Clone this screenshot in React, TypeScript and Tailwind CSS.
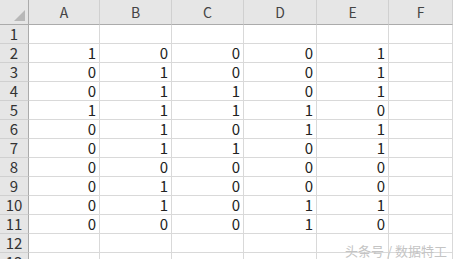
const cols = ["A", "B", "C", "D", "E", "F"];

const data: (number[] | null)[] = [
  null,
  [1, 0, 0, 0, 1],
  [0, 1, 0, 0, 1],
  [0, 1, 1, 0, 1],
  [1, 1, 1, 1, 0],
  [0, 1, 0, 1, 1],
  [0, 1, 1, 0, 1],
  [0, 0, 0, 0, 0],
  [0, 1, 0, 0, 0],
  [0, 1, 0, 1, 1],
  [0, 0, 0, 1, 0],
  null,
  null,
];

export default function App() {
  return (
    <div
      className="relative h-[259px] w-[453px] overflow-hidden bg-white"
      style={{ fontFamily: '"Noto Sans CJK SC", "Noto Sans", sans-serif' }}
    >
      <div className="grid grid-cols-[29px_71px_72px_72px_73px_72px_1fr]">
        {/* corner */}
        <div className="relative h-[25px] border-b border-r border-[#ababab] bg-[#e6e6e6]">
          <div className="absolute bottom-[3px] right-[3px] h-0 w-0 border-b-[11px] border-l-[11px] border-b-[#b8b8b8] border-l-transparent" />
        </div>
        {cols.map((c) => (
          <div
            key={c}
            className="flex h-[25px] items-center justify-center border-b border-r border-b-[#ababab] border-r-[#d0d0d0] bg-[#e6e6e6] text-[14px] text-[#444]"
          >
            {c}
          </div>
        ))}
        {data.map((row, r) => (
          <Row key={r} n={r + 1} values={row} />
        ))}
      </div>
      <div className="absolute right-[6px] top-[244px] text-[13px] leading-none text-[#c4c4c4]">
        头条号 / 数据特工
      </div>
    </div>
  );
}

function Row({ n, values }: { n: number; values: number[] | null }) {
  return (
    <>
      <div className="flex h-[19px] items-center justify-center border-b border-r border-b-[#d0d0d0] border-r-[#ababab] bg-[#e6e6e6] text-[15px] text-[#333]">
        {n}
      </div>
      {cols.map((c, i) => (
        <div
          key={c}
          className="flex h-[19px] items-center justify-end border-b border-r border-[#d9d9d9] pr-[3px] text-[15px] text-[#222]"
        >
          {values && i < values.length ? values[i] : ""}
        </div>
      ))}
    </>
  );
}
